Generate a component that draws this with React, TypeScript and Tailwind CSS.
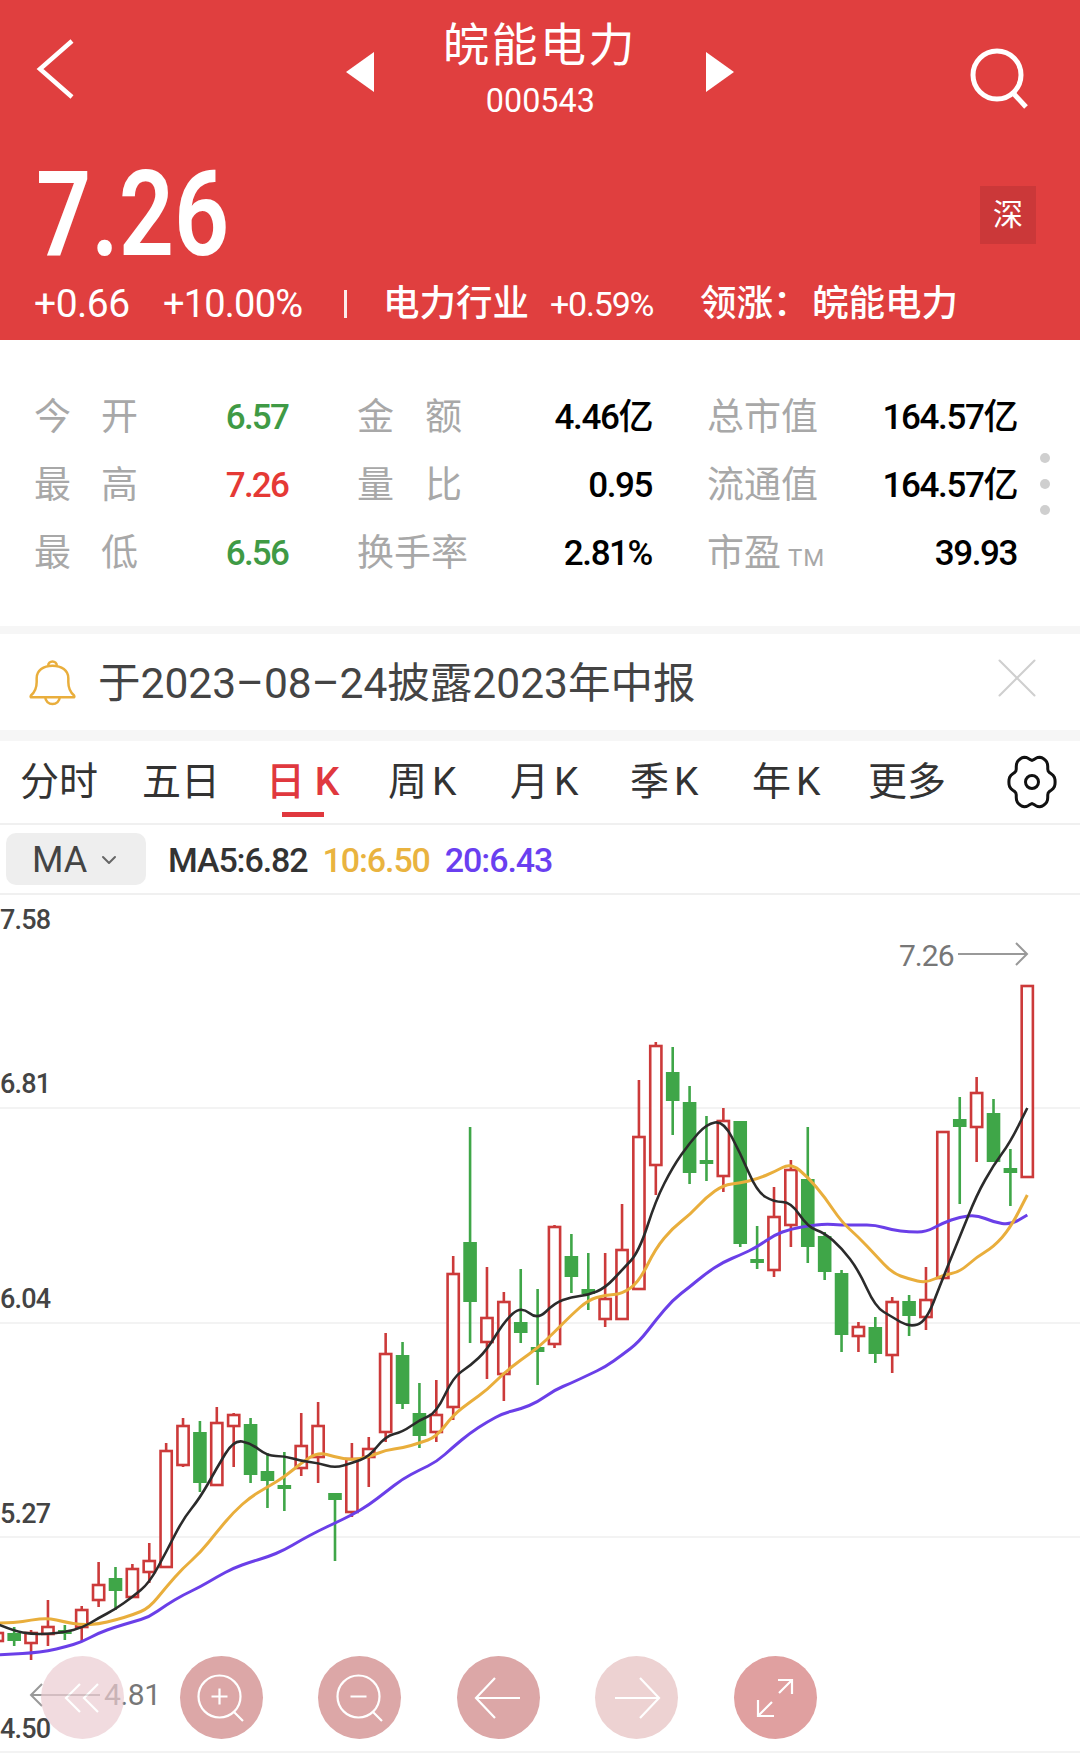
import { ChevronDown, X } from "lucide-react"

const CJK = "font-['Roboto','Noto_Sans_CJK_SC',sans-serif]"

// wick top, body top, body bottom, wick bottom, up?
type Candle = [number, number, number, number, 0 | 1]

const candles: Candle[] = [
  [1630, 1633, 1641, 1646, 1], [1627, 1633, 1641, 1646, 0], [1630, 1633, 1643, 1660, 1], [1600, 1627, 1634, 1646, 1],
  [1625, 1630, 1634, 1640, 0], [1606, 1610, 1627, 1641, 1], [1562, 1585, 1600, 1607, 1], [1567, 1578, 1591, 1610, 0],
  [1564, 1569, 1597, 1598, 1], [1543, 1561, 1572, 1583, 1], [1443, 1451, 1567, 1568, 1], [1418, 1426, 1465, 1467, 1],
  [1421, 1432, 1483, 1492, 0], [1407, 1423, 1485, 1486, 1], [1413, 1415, 1426, 1467, 1], [1418, 1424, 1475, 1483, 0],
  [1453, 1471, 1481, 1508, 0], [1452, 1485, 1489, 1511, 0], [1413, 1446, 1468, 1476, 1], [1402, 1426, 1457, 1483, 1],
  [1493, 1493, 1500, 1561, 0], [1443, 1459, 1512, 1517, 1], [1437, 1449, 1457, 1487, 1], [1333, 1354, 1432, 1442, 1],
  [1342, 1355, 1404, 1409, 0], [1383, 1413, 1436, 1448, 0], [1380, 1415, 1432, 1442, 1], [1256, 1274, 1407, 1420, 1],
  [1127, 1242, 1302, 1343, 0], [1267, 1318, 1342, 1379, 1], [1292, 1302, 1374, 1401, 1], [1269, 1322, 1333, 1343, 0],
  [1289, 1347, 1352, 1385, 0], [1225, 1227, 1344, 1348, 1], [1234, 1256, 1277, 1293, 0], [1253, 1289, 1294, 1310, 0],
  [1253, 1299, 1319, 1327, 1], [1204, 1250, 1319, 1319, 1], [1080, 1137, 1289, 1289, 1], [1042, 1046, 1165, 1195, 1],
  [1047, 1072, 1101, 1135, 0], [1086, 1102, 1173, 1184, 0], [1116, 1160, 1164, 1181, 0], [1108, 1121, 1176, 1192, 1],
  [1121, 1121, 1244, 1247, 0], [1226, 1259, 1263, 1269, 0], [1187, 1217, 1270, 1277, 1], [1160, 1170, 1225, 1247, 1],
  [1127, 1179, 1247, 1263, 0], [1232, 1236, 1272, 1280, 0], [1270, 1273, 1335, 1352, 0], [1322, 1327, 1336, 1352, 1],
  [1317, 1327, 1354, 1363, 0], [1297, 1302, 1355, 1373, 1], [1295, 1301, 1316, 1336, 0], [1267, 1300, 1317, 1330, 1],
  [1132, 1132, 1278, 1278, 1], [1097, 1119, 1127, 1204, 0], [1077, 1093, 1127, 1162, 1], [1099, 1113, 1162, 1162, 0],
  [1149, 1168, 1173, 1206, 0], [986, 986, 1177, 1178, 1],
]

const ma5 = [1624, 1631, 1634, 1634, 1632, 1628, 1618, 1609, 1597, 1583, 1552, 1519, 1498, 1468, 1440, 1443, 1456, 1456, 1461, 1463, 1468, 1463, 1457, 1436, 1432, 1420, 1413, 1377, 1366, 1350, 1322, 1306, 1320, 1303, 1297, 1295, 1288, 1270, 1252, 1200, 1167, 1143, 1124, 1121, 1153, 1192, 1202, 1202, 1227, 1233, 1248, 1270, 1307, 1317, 1327, 1322, 1278, 1237, 1195, 1165, 1142, 1108]
const ma10 = [1623, 1623, 1620, 1618, 1622, 1625, 1624, 1620, 1615, 1608, 1587, 1568, 1553, 1532, 1512, 1497, 1487, 1477, 1463, 1452, 1457, 1460, 1457, 1450, 1448, 1443, 1437, 1415, 1402, 1390, 1373, 1360, 1348, 1332, 1315, 1300, 1295, 1294, 1282, 1248, 1228, 1215, 1197, 1185, 1183, 1179, 1172, 1163, 1177, 1197, 1222, 1237, 1255, 1273, 1279, 1283, 1275, 1272, 1257, 1247, 1228, 1195]
const ma20 = [1655, 1654, 1653, 1651, 1647, 1642, 1633, 1627, 1622, 1617, 1605, 1595, 1587, 1577, 1568, 1562, 1557, 1550, 1540, 1531, 1523, 1515, 1505, 1492, 1479, 1470, 1462, 1447, 1433, 1422, 1413, 1409, 1402, 1390, 1383, 1375, 1367, 1355, 1342, 1320, 1300, 1287, 1273, 1262, 1255, 1247, 1235, 1229, 1226, 1224, 1225, 1225, 1225, 1230, 1232, 1232, 1223, 1217, 1215, 1222, 1225, 1215]

const xAt = (i: number) => -2.7 + i * 16.885

// rounds the corners of a moving average through segment midpoints
function smoothPath(ys: number[]) {
  let d = `M${xAt(0).toFixed(1)} ${ys[0]}`
  for (let i = 1; i < ys.length - 1; i++) {
    const midX = (xAt(i) + xAt(i + 1)) / 2
    const midY = (ys[i] + ys[i + 1]) / 2
    d += `Q${xAt(i).toFixed(1)} ${ys[i]} ${midX.toFixed(1)} ${midY}`
  }
  return d + `L${xAt(ys.length - 1).toFixed(1)} ${ys[ys.length - 1]}`
}

// six lobed outline for the settings cog
function cogPath() {
  const pts: string[] = []
  for (let a = 0; a < 360; a += 5) {
    const t = (a * Math.PI) / 180
    const r = 21.4 + 2.2 * Math.cos(6 * t) - 0.5 * Math.cos(12 * t)
    pts.push(`${(27 + r * Math.cos(t)).toFixed(2)},${(27 + 1.16 * r * Math.sin(t)).toFixed(2)}`)
  }
  return pts.join(" ")
}

const stats = [
  [["今", "开"], "6.57", "text-[#3f9a45]", ["金", "额"], "4.46亿", "总市值", "164.57亿"],
  [["最", "高"], "7.26", "text-[#e53935]", ["量", "比"], "0.95", "流通值", "164.57亿"],
  [["最", "低"], "6.56", "text-[#3f9a45]", ["换手率"], "2.81%", "市盈", "39.93"],
] as const

function Chart() {
  return (
    <svg viewBox="0 895 1080 861" className="absolute inset-0 h-full w-full">
      {[1108, 1323, 1537, 1752].map((y) => (
        <line key={y} x1="0" x2="1080" y1={y} y2={y} stroke="#f3f3f3" strokeWidth="2" />
      ))}
      {candles.map(([wt, bt, bb, wb, up], i) => {
        const x = xAt(i)
        const color = up ? "#cc3a3a" : "#3fa648"
        return (
          <g key={i}>
            <line x1={x} x2={x} y1={wt} y2={up ? bt : wb} stroke={color} strokeWidth="2.6" />
            {up ? <line x1={x} x2={x} y1={bb} y2={wb} stroke={color} strokeWidth="2.6" /> : null}
            {up ? (
              <rect x={x - 5.6} y={bt} width="11.2" height={Math.max(bb - bt, 1)} fill="#fff" stroke={color} strokeWidth="2.6" />
            ) : (
              <rect x={x - 6.8} y={bt} width="13.6" height={Math.max(bb - bt, 3)} fill={color} />
            )}
          </g>
        )
      })}
      <path d={smoothPath(ma20)} fill="none" stroke="#6a3fe8" strokeWidth="3" />
      <path d={smoothPath(ma10)} fill="none" stroke="#e9ae3c" strokeWidth="3" />
      <path d={smoothPath(ma5)} fill="none" stroke="#2b2b2b" strokeWidth="2.6" />
      {/* high and low markers */}
      <path d="M958 954H1027M1016 943l11 11-11 11" fill="none" stroke="#999" strokeWidth="2" />
      <path d="M100 1695H31M42 1684l-11 11 11 11" fill="none" stroke="#999" strokeWidth="2" />
    </svg>
  )
}

function RoundButton({ tone, children }: { tone: string; children: React.ReactNode }) {
  return (
    <div className={`flex h-[83px] w-[83px] items-center justify-center rounded-full ${tone}`}>
      <svg viewBox="0 0 48 48" className="h-[48px] w-[48px]" fill="none" stroke="#fff" strokeWidth="2.2">
        {children}
      </svg>
    </div>
  )
}

export default function App() {
  return (
    <div className={`flex h-[1756px] w-[1080px] flex-col overflow-hidden bg-white ${CJK}`}>
      <header className="flex h-[340px] flex-col bg-[#e03f3f] text-white">
        <div className="flex h-[130px] items-start">
          <div className="ml-[36px] mt-[37px] w-[310px]">
            <svg viewBox="0 0 40 64" className="h-[64px] w-[40px]" fill="none" stroke="#fff" strokeWidth="4.5">
              <path d="M36 4L4 32l32 28" />
            </svg>
          </div>
          <div className="mt-[52px] h-0 w-0 border-y-[20px] border-r-[28px] border-y-transparent border-r-white" />
          <div className="flex w-[332px] flex-col items-center">
            <div className="mt-[16px] text-[46px] leading-[58px] tracking-[2.5px]">皖能电力</div>
            <div className="mt-[5px] scale-x-95 text-[34px] leading-[42px]">000543</div>
          </div>
          <div className="mt-[52px] h-0 w-0 border-y-[20px] border-l-[28px] border-y-transparent border-l-white" />
          <div className="ml-[234px] mt-[46px]">
            <svg viewBox="0 0 64 64" className="h-[64px] w-[64px]" fill="none" stroke="#fff" strokeWidth="5">
              <circle cx="29" cy="29" r="24" />
              <path d="M46 48l12 13" />
            </svg>
          </div>
        </div>
        <div className="mt-[22px] flex h-[125px] items-center justify-between pl-[36px] pr-[44px]">
          <span className="origin-left scale-x-[0.82] text-[118px] leading-none font-semibold">7.26</span>
          <span className="flex h-[58px] w-[56px] items-center justify-center bg-[#cb3839] text-[30px]">深</span>
        </div>
        <div className="mt-[5px] flex items-center text-[36px] leading-[44px]">
          <span className="ml-[34px] w-[129px] text-[39px] tracking-[-0.5px]">+0.66</span>
          <span className="w-[181px] text-[38px] tracking-[-0.8px]">+10.00%</span>
          <span className="h-[28px] w-[3px] bg-white/90" />
          <span className="ml-[36px] w-[167px] text-[36.5px] font-medium">电力行业</span>
          <span className="w-[150px] text-[34px] tracking-[-1.2px]">+0.59%</span>
          <span className="w-[112px] text-[36.5px] font-medium">领涨：</span>
          <span className="text-[36.5px] font-medium">皖能电力</span>
        </div>
      </header>

      <section className="relative flex h-[286px] flex-col pt-[44px]">
        {stats.map(([a, av, tone, b, bv, c, cv], i) => (
          <div key={i} className="flex h-[68px] items-center text-[37px]">
            <span className="ml-[34px] flex w-[104px] justify-between text-[#a8a8a8]">
              {a.map((t) => <span key={t}>{t}</span>)}
            </span>
            <span className={`w-[150px] text-right text-[35px] font-medium tracking-[-1.8px] ${tone}`}>{av}</span>
            <span className="ml-[69px] w-[113px] text-[#a8a8a8]">
              <span className={`flex ${b.length > 1 ? "w-[105px] justify-between" : ""}`}>
                {b.map((t) => <span key={t}>{t}</span>)}
              </span>
            </span>
            <span className="w-[182px] text-right text-[35px] font-medium tracking-[-1.4px] text-black">{bv}</span>
            <span className="ml-[55px] w-[133px] text-[#a8a8a8]">
              {c}
              {i === 2 ? <span className="ml-[7px] text-[24px] tracking-[1px]">TM</span> : null}
            </span>
            <span className="w-[177px] text-right text-[35px] font-medium tracking-[-1.4px] text-black">{cv}</span>
          </div>
        ))}
        <div className="absolute top-[113px] right-[30px] flex flex-col gap-[16px]">
          <span className="h-[10px] w-[10px] rounded-full bg-[#cfcfcf]" />
          <span className="h-[10px] w-[10px] rounded-full bg-[#cfcfcf]" />
          <span className="h-[10px] w-[10px] rounded-full bg-[#cfcfcf]" />
        </div>
      </section>

      <div className="flex h-[115px] items-center border-t-[8px] border-b-[11px] border-[#f6f6f6] pl-[29px] pr-[28px]">
        <svg viewBox="0 0 49 49" className="h-[47px] w-[47px]" fill="none" stroke="#e9ae3c" strokeWidth="2.6">
          <path d="M3 40Q1 40 2 38Q8 33 8 24V20C8 12 15 7 24.5 7C34 7 41 12 41 20V24Q41 33 47 38Q48 40 46 40Z" />
          <path d="M20 7a4.5 4.5 0 0 1 9 0M17 40a7.5 7 0 0 0 15 0" />
        </svg>
        <span className="mt-[3px] ml-[22px] flex-1 text-[42.5px] text-[#444]">于2023–08–24披露2023年中报</span>
        <X className="mb-[8px] h-[70px] w-[70px] text-[#cfcfcf]" strokeWidth={0.7} />
      </div>

      <nav className="relative flex h-[84px] items-center border-b-[2px] border-b-[#f0f0f0] text-[39px] whitespace-nowrap text-[#333]">
        <span className="ml-[20px] w-[80px]">分时</span>
        <span className="ml-[42px] w-[80px]">五日</span>
        <span className="relative ml-[44px] w-[72px] font-medium text-[#e0383e]">
          日 K
          <span className="absolute top-[59px] left-[16px] h-[5px] w-[42px] bg-[#e0383e]" />
        </span>
        <span className="ml-[50px] w-[72px] tracking-[5px]">周K</span>
        <span className="ml-[50px] w-[70px] tracking-[5px]">月K</span>
        <span className="ml-[50px] w-[72px] tracking-[5px]">季K</span>
        <span className="ml-[50px] w-[72px] tracking-[5px]">年K</span>
        <span className="ml-[44px] w-[80px]">更多</span>
        <svg viewBox="0 0 54 54" className="ml-[57px] h-[54px] w-[54px]" fill="none" stroke="#111" strokeWidth="3">
          <polygon points={cogPath()} />
          <circle cx="27" cy="27" r="6.5" />
        </svg>
      </nav>

      <div className="flex h-[70px] items-center border-b-[2px] border-[#f0f0f0] pl-[6px]">
        <div className="flex h-[52px] w-[140px] items-center rounded-[10px] bg-[#eeeeee] pt-[2px] pl-[26px] text-[36px] text-[#444]">
          MA
          <ChevronDown className="ml-[10px] h-[24px] w-[24px] text-[#666]" strokeWidth={2} />
        </div>
        <div className="mt-[3px] ml-[22px] flex gap-[15px] text-[34px] font-medium tracking-[-1.1px]">
          <span className="text-[#333]">MA5:6.82</span>
          <span className="text-[#e9b33f]">10:6.50</span>
          <span className="text-[#6a3ff0]">20:6.43</span>
        </div>
      </div>

      <div className="relative flex-1">
        <Chart />
        {[
          ["7.58", "top-[9px]"],
          ["6.81", "top-[173px]"],
          ["6.04", "top-[388px]"],
          ["5.27", "top-[603px]"],
          ["4.50", "top-[818px]"],
        ].map(([label, pos]) => (
          <span key={label} className={`absolute left-0 text-[27px] leading-[32px] font-medium tracking-[-0.8px] text-[#444] ${pos}`}>
            {label}
          </span>
        ))}
        <span className="absolute top-[43px] left-[899px] text-[30px] leading-[36px] tracking-[-1px] text-[#777]">7.26</span>
        <span className="absolute top-[782px] left-[104px] text-[30px] leading-[36px] tracking-[-0.5px] text-[#777]">4.81</span>

        <div className="absolute top-[761px] left-[41px] flex gap-[55.6px]">
          <div className="opacity-70">
            <RoundButton tone="bg-[#eccdd2]">
              <path d="M21 10L7 24l14 14M39 10L25 24l14 14" />
            </RoundButton>
          </div>
          <RoundButton tone="bg-[#dca7a7]">
            <circle cx="22.5" cy="22.5" r="21" />
            <path d="M22.5 14.5v16M14.5 22.5h16M37 38l9 9" />
          </RoundButton>
          <RoundButton tone="bg-[#dca7a7]">
            <circle cx="22.5" cy="22.5" r="21" />
            <path d="M14.5 22.5h16M37 38l9 9" />
          </RoundButton>
          <RoundButton tone="bg-[#dca7a7]">
            <path d="M2 24h44M21 4L2 24l19 20" />
          </RoundButton>
          <RoundButton tone="bg-[#edd2d2]">
            <path d="M2 24h44M27 4l19 20-19 20" />
          </RoundButton>
          <RoundButton tone="bg-[#e0a0a0]">
            <path d="M27 6h14v14M41 6L28 19M7 26v16h16M7 42l14-14" />
          </RoundButton>
        </div>
      </div>
    </div>
  )
}
